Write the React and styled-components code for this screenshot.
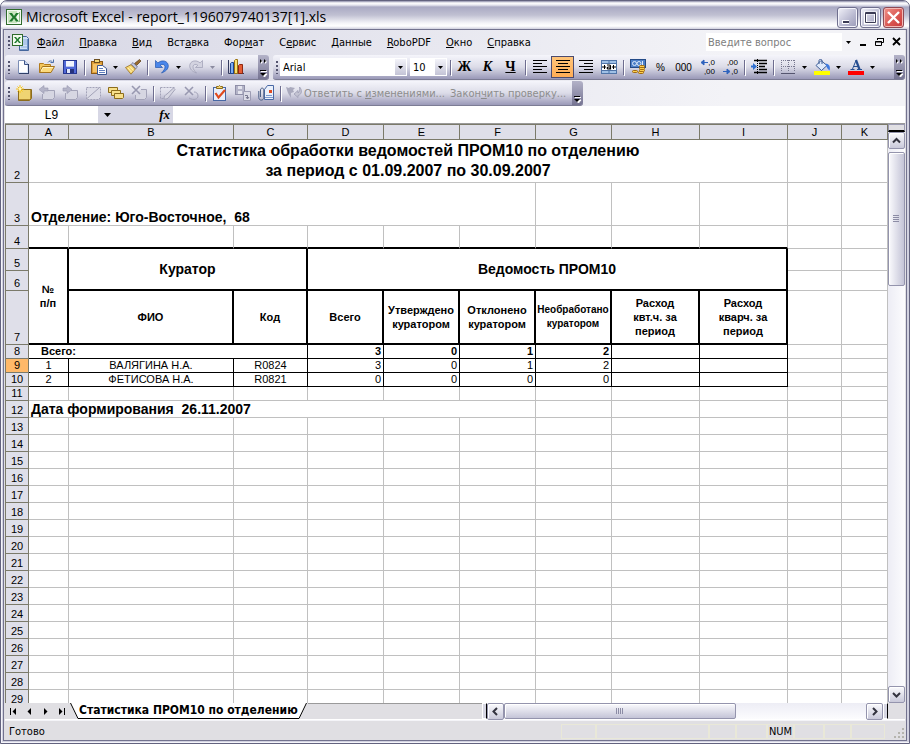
import { Fragment } from 'react';
import styled, { createGlobalStyle, css } from 'styled-components';

const uiFont = '"DejaVu Sans Condensed", "Noto Sans", sans-serif';
const cellFont = '"Liberation Sans", Arial, sans-serif';

const icons = {
  excel: (
    <>
      <rect x="0" y="0" width="16" height="16" fill="#2f6b2c" />
      <rect x="1" y="1" width="14" height="14" fill="#f4faf1" />
      <rect x="2" y="2" width="9" height="12" fill="#cbe6c1" />
      <path d="M3 4h3l2 3 2-3h3L9.500 8.200 13 12.500h-3l-2-3-2 3H3l3.500-4.300z" fill="#1f7a2c" />
      <path d="M13.500 3v10" stroke="#8dbf85" />
    </>
  ),
  workbook: (
    <>
      <path d="M7.500 2.500h7l2 2v12h-9z" fill="#cfe0f7" stroke="#44669c" />
      <path d="M15.500 5v11M8 15.500h8" stroke="#6f93c9" />
      <path d="M11 6h4M11 8h4M11 10h4M9 13h6" stroke="#8fb0de" />
      <rect x="0.500" y="0.500" width="10" height="11" fill="#f1faed" stroke="#2f6b2c" />
      <path d="M2 3h2l1.500 2L7 3h2L6.500 6 9 9H7L5.500 7 4 9H2l2.500-3z" fill="#1f7a2c" />
    </>
  ),
  page: (
    <>
      <path d="M2.500 1.500h6l4 4v9h-10z" fill="#fff" stroke="#7b8db5" />
      <path d="M8.500 1.500v4h4" fill="#c8d7f0" stroke="#3f5488" />
      <path d="M12.500 5v10M3 14.500h10" stroke="#2f3f68" />
      <path d="M11.500 6v8M3 13.500h9" stroke="#dbe5f7" />
    </>
  ),
  open: (
    <>
      <path d="M0.500 13.500v-9h4l1 1h6v3" fill="#f2c65c" stroke="#b27b1c" />
      <path d="M0.500 13.500l3-6h12l-3.500 6z" fill="#fbd97a" stroke="#a5731b" />
      <path d="M9 3.500c1-2 3.500-2 4.500-.5M14.500 0.500v3h-3" fill="none" stroke="#4a6fa8" />
      <path d="M2 12l2-3.500h10" stroke="#fff3c4" fill="none" />
    </>
  ),
  save: (
    <>
      <rect x="1.500" y="1.500" width="13" height="13" fill="#5068d8" stroke="#27378f" />
      <rect x="4" y="2" width="8" height="6" fill="#f1f4fd" />
      <path d="M4 7.500h8" stroke="#b8c4ea" />
      <rect x="4" y="10" width="8" height="4" fill="#25327d" />
      <rect x="5" y="10" width="3" height="4" fill="#dfe5fa" />
    </>
  ),
  paste: (
    <>
      <rect x="0.500" y="2.500" width="11" height="12" fill="#e0a13a" stroke="#8a5a17" />
      <rect x="3.500" y="0.500" width="5" height="3" fill="#f6d978" stroke="#6d5020" />
      <rect x="2" y="5" width="8" height="8" fill="#f4c469" />
      <path d="M6.500 6.500h5l4 3v6h-9z" fill="#fff" stroke="#3a5590" />
      <path d="M8 9.500h4M8 11.500h6M8 13.500h6" stroke="#5e7dbd" />
    </>
  ),
  brush: (
    <>
      <path d="M14.500 0.500l1.500 1.500-4.500 4.500-2-2z" fill="#9a6c2f" stroke="#5a3c14" strokeWidth="0.700" />
      <path d="M8 3.500l4.500 4.500-1.800 1.800-4.500-4.500z" fill="#c3c8dd" stroke="#5b6285" strokeWidth="0.700" />
      <path d="M6 5.700l4.300 4.300L6 15.200 0.500 8.500z" fill="#f6d672" stroke="#9b7020" strokeWidth="0.800" />
      <path d="M3 9l3.500 4M5 7.700l3.500 3.800" stroke="#fff1b8" />
    </>
  ),
  undo: (
    <path
      d="M1.500 1.500v7h7L6.200 6.200c2-1.500 4.600-.9 4.800 1.400.2 2.300-1.400 4.300-3.500 6.400 4-1.400 7-4 6.800-7.400C13.900 1.800 8 .3 3.900 3.900z"
      fill="#4a86ea"
      stroke="#2456ad"
      strokeWidth="0.700"
    />
  ),
  redo: (
    <path
      d="M14.500 1.500v7h-7l2.300-2.300c-2-1.500-4.600-.9-4.800 1.400-.2 2.300 1.400 4.300 3.500 6.400-4-1.400-7-4-6.800-7.400C2.100 1.800 8 .3 12.100 3.900z"
      fill="#d3d3e0"
      stroke="#9c9cb3"
      strokeWidth="0.700"
    />
  ),
  chart: (
    <>
      <path d="M0.500 1v13.500H16" fill="none" stroke="#333a5e" />
      <path d="M2.500 4.500l1-1h2v11h-3z" fill="#7dabef" stroke="#1e4591" />
      <path d="M6.500 1.500l1-1h2v14h-3z" fill="#f9df75" stroke="#9c7412" />
      <path d="M10.500 6.500l1-1h3v9h-4z" fill="#e55b33" stroke="#8f2810" />
    </>
  ),
  left: <path d="M1 2.500h14M1 5.500h9M1 8.500h14M1 11.500h9M1 14.500h14" stroke="#000" shapeRendering="crispEdges" transform="translate(0 -1)" />,
  center: <path d="M1 2.500h14M3 5.500h10M1 8.500h14M3 11.500h10M1 14.500h14" stroke="#000" shapeRendering="crispEdges" transform="translate(0 -1)" />,
  right: <path d="M1 2.500h14M6 5.500h9M1 8.500h14M6 11.500h9M1 14.500h14" stroke="#000" shapeRendering="crispEdges" transform="translate(0 -1)" />,
  merge: (
    <>
      <rect x="0.500" y="1.500" width="15" height="13" fill="#fff" stroke="#4f74a8" />
      <rect x="1" y="2" width="14" height="2" fill="#9fc0e6" />
      <rect x="1" y="12" width="14" height="2" fill="#9fc0e6" />
      <path d="M0 4.500h16M0 11.500h16M8 2v3M8 11v3" stroke="#4f74a8" />
      <path d="M1 8h4M11 8h4M3.500 6v4M12.500 6v4" stroke="#000" />
      <path d="M6 6h2.500c1 0 1 .5 1 1v3.500M9.500 8H7.300c-1.500 0-1.500 2 0 2 1.200 0 2.200-.4 2.200-1" stroke="#000" strokeWidth="1.200" fill="none" />
    </>
  ),
  currency: (
    <>
      <rect x="0.500" y="0.500" width="15" height="8" fill="#4d80c9" stroke="#234a87" />
      <circle cx="4.500" cy="4.500" r="2" fill="none" stroke="#d9e8fb" />
      <circle cx="9" cy="4.500" r="2" fill="none" stroke="#d9e8fb" />
      <path d="M12.500 2v5" stroke="#d9e8fb" />
      <rect x="9.500" y="6.500" width="5" height="2" rx="1" fill="#fbd04e" stroke="#a36a10" />
      <rect x="9.500" y="8.500" width="5" height="2" rx="1" fill="#fbd04e" stroke="#a36a10" />
      <rect x="9.500" y="10.500" width="5" height="2" rx="1" fill="#fbd04e" stroke="#a36a10" />
      <rect x="8.500" y="12.500" width="5" height="2" rx="1" fill="#fbd04e" stroke="#a36a10" />
      <rect x="2.500" y="11.500" width="5" height="2" rx="1" fill="#fbd04e" stroke="#a36a10" />
    </>
  ),
  indent: (
    <>
      <path d="M3 1.500h13M8 4.500h8M8 7.500h6M8 10.500h8M3 13.500h13" stroke="#000" strokeWidth="1.400" />
      <path d="M6.500 0v16" stroke="#000" strokeDasharray="1 1" />
      <path d="M0 6.500h2V4l4 3.500L2 11V8.500H0z" fill="#2f6fd0" />
    </>
  ),
  borders: (
    <>
      <path d="M1.500 1v12M8.500 1v12M14.500 1v12M1 1.500h14M1 7.500h14" stroke="#77778f" strokeDasharray="1 1" />
      <path d="M1 14.500h14" stroke="#55556f" />
    </>
  ),
  fill: (
    <>
      <path d="M7 1.500l6 5-5.500 5L2 6.500z" fill="#dfe9fa" stroke="#3c5c96" />
      <path d="M5 5V1.500C5 0 8 0 8 1.500V5" fill="none" stroke="#3c5c96" />
      <path d="M11.500 4.500c4 .5 5 3 4.100 7-1.700-1-2.800-3-3.300-4.500z" fill="#3f7be0" />
      <rect x="0" y="12" width="16" height="4" fill="#ff0" />
    </>
  ),
  fontColor: (
    <>
      <path d="M2.500 10.500h4M9 10.500h5M4.500 10L8 1.500M6 7.500h4.500" fill="none" stroke="#274f91" />
      <path d="M8 1l3.500 9.500" stroke="#274f91" strokeWidth="2.200" />
      <rect x="0" y="12" width="16" height="4" fill="#f00" />
    </>
  ),
  noteNew: (
    <>
      <path d="M2.500 4.500h13v9l-2 2h-11z" fill="#efd472" stroke="#8c6c1c" />
      <path d="M3 14.500h11M14.500 5v9" stroke="#b08b2e" />
      <path d="M4 0v8M0 4h8M1.500 1.500l5 5M6.500 1.500l-5 5" stroke="#f9c413" />
      <circle cx="4" cy="4" r="1.500" fill="#fff6b8" />
    </>
  ),
  noteBack: (
    <>
      <path d="M7 5.500h8.500v7l-2 2h-10V9" fill="#d6d6e2" stroke="#a3a3b8" />
      <path d="M0 4.500l5-4V3h4v3H5v2.500z" fill="#b4b4c8" stroke="#9898b0" strokeWidth="0.600" />
    </>
  ),
  noteForward: (
    <>
      <path d="M9 5.500h6.500v7l-2 2h-10V8" fill="#d6d6e2" stroke="#a3a3b8" />
      <path d="M10 4.500l-5-4V3H1v3h4v2.500z" fill="#b4b4c8" stroke="#9898b0" strokeWidth="0.600" />
    </>
  ),
  noteHide: (
    <>
      <path d="M1.500 2.500h14v10l-2 2h-12z" fill="#dcdce7" stroke="#a3a3b8" strokeDasharray="2 1" />
      <path d="M2 13.500L14 3" stroke="#a3a3b8" />
    </>
  ),
  notes: (
    <>
      <path d="M0.500 2.500h9v4l-1 1h-8z" fill="#f8e08a" stroke="#8c6c1c" />
      <path d="M3.500 5.500h9v4l-1 1h-8z" fill="#f8e08a" stroke="#8c6c1c" />
      <path d="M6.500 8.500h9v4l-1 1h-8z" fill="#f8e08a" stroke="#8c6c1c" />
    </>
  ),
  noteDelete: (
    <>
      <path d="M10 4.500h5.500v8l-2 2h-9V10" fill="#d6d6e2" stroke="#a3a3b8" />
      <path d="M1 1l8 8M9 1L1 9" stroke="#9898b0" strokeWidth="1.600" />
    </>
  ),
  ink: (
    <>
      <path d="M0.500 2.500h15M0.500 2.500v11h5" fill="none" stroke="#a3a3b8" strokeDasharray="2 1" />
      <path d="M4 14c0-3 1-4 3-5l6.500-6 1.500 1.500-6 7.500c-1 2-3 2-5 2z" fill="#d6d6e2" stroke="#a3a3b8" />
    </>
  ),
  inkDelete: (
    <>
      <path d="M2 2l8 8M10 2l-8 8" stroke="#9898b0" strokeWidth="1.600" />
      <path d="M6 13c5 3 9 1 9-2s-2-4-4-4" fill="none" stroke="#a3a3b8" />
    </>
  ),
  task: (
    <>
      <rect x="1.500" y="2.500" width="12" height="13" fill="#e8eefb" stroke="#4868a5" />
      <path d="M4.500 3.500v-2h2l1-1 1 1h2v2z" fill="#f6d672" stroke="#8c6c1c" />
      <path d="M3.500 8l3 4.500L13 5" fill="none" stroke="#e04a1e" strokeWidth="2.200" />
    </>
  ),
  saveCopy: (
    <>
      <rect x="0.500" y="0.500" width="9" height="9" fill="#b4b4c8" stroke="#8f8fa8" />
      <rect x="3" y="1" width="4" height="3" fill="#e5e5ee" />
      <rect x="3" y="6" width="4" height="3" fill="#e5e5ee" />
      <path d="M8.500 6.500h7v9h-7z" fill="#dcdce7" stroke="#9c9cb3" />
      <path d="M10 10.500h2.500v3M11 12l1.500 2 1.500-2" fill="none" stroke="#77778f" />
    </>
  ),
  mail: (
    <>
      <path d="M6.500 4.500l3-4h6v14h-9z" fill="#eaf0fb" stroke="#4868a5" />
      <path d="M7 12.500h8M8 10.500h6" stroke="#7b98cc" />
      <rect x="11" y="5" width="3" height="3" fill="#e04a1e" />
      <path d="M0.800 6v6.500c0 3.500 5 3.500 5 0V5c0-2.500-3.300-2.500-3.300 0v7" fill="none" stroke="#4a5f86" />
    </>
  ),
  reply: (
    <>
      <path d="M0 2l3 1 1-1 5 1-2 2 1 2-3 1v5L2 8z" fill="#a9a9bd" />
      <path d="M8 9l4-3.500V8c1.500-1 2-3 1.500-6C16.500 5 16 9.500 12 10.500v2z" fill="#c4c4d3" stroke="#9898b0" strokeWidth="0.700" />
    </>
  ),
};

const Icon = ({ name, size = 16 }) => (
  <svg width={size} height={size} viewBox={`0 0 ${size} ${size}`} aria-hidden="true">
    {icons[name]}
  </svg>
);

const Arrow = ({ color = '#000' }) => (
  <svg width="5" height="3" viewBox="0 0 5 3" aria-hidden="true">
    <path d="M0 0h5L2.500 3z" fill={color} />
  </svg>
);

const Chevron = ({ d }) => (
  <svg width="9" height="9" viewBox="0 0 9 9" aria-hidden="true">
    <path d={d} fill="none" stroke="#33333f" strokeWidth="2" />
  </svg>
);

const menus = [
  ['', 'Ф', 'айл'],
  ['', 'П', 'равка'],
  ['', 'В', 'ид'],
  ['Вст', 'а', 'вка'],
  ['Фор', 'м', 'ат'],
  ['С', 'е', 'рвис'],
  ['', 'Д', 'анные'],
  ['', 'R', 'oboPDF'],
  ['', 'О', 'кно'],
  ['', 'С', 'правка'],
];

const columns = [
  ['A', 40],
  ['B', 165],
  ['C', 74],
  ['D', 76],
  ['E', 76],
  ['F', 76],
  ['G', 76],
  ['H', 88],
  ['I', 88],
  ['J', 54],
  ['K', null],
];

const people = [
  { row: 9, id: 1, name: 'ВАЛЯГИНА Н.А.', code: 'R0824', values: [3, 0, 1, 2] },
  { row: 10, id: 2, name: 'ФЕТИСОВА Н.А.', code: 'R0821', values: [0, 0, 0, 0] },
];

const emptyRows = Array.from({ length: 17 }, (_, i) => i + 13);

const statusCells = [35, 113, 27, 31];
const statusCellsAfter = [30, 27, 34];

const Tool = ({ name, label, pressed, disabled }) => (
  <ToolButton aria-label={label} $pressed={pressed} disabled={disabled}>
    <Icon name={name} />
  </ToolButton>
);

const Drop = ({ label, disabled }) => (
  <DropButton aria-label={label} disabled={disabled}>
    <Arrow color={disabled ? '#8b8ba0' : '#000'} />
  </DropButton>
);

const ToolbarEnd = ({ more }) => (
  <Overflow aria-label="Параметры панелей инструментов">
    <svg width="9" height="22" viewBox="0 0 9 22" aria-hidden="true">
      {more && <path d="M2 4l2 2-2 2zM6 4l2 2-2 2z" fill="#fff" />}
      {more && <path d="M1 3l2 2-2 2zM5 3l2 2-2 2z" fill="#000" />}
      <path d="M2 15.500h6M3 18h5L5.500 21z" stroke="#fff" fill="#fff" />
      <path d="M1 14.500h6" stroke="#000" />
      <path d="M1 17h6l-3 3z" fill="#000" />
    </svg>
  </Overflow>
);

const Blank = ({ count }) =>
  Array.from({ length: count }, (_, i) => <Cell key={i} />);

const App = () => (
  <Fragment>
    <GlobalStyle />
    <Window>
      <TitleBar>
        <Icon name="excel" />
        <Title>Microsoft Excel - report_1196079740137[1].xls</Title>
        <Caption aria-label="Свернуть">
          <svg width="19" height="19" viewBox="0 0 19 19">
            <path d="M4 14h7" stroke="#fff" strokeWidth="4" />
            <path d="M5 14h6" stroke="#3b3b55" strokeWidth="2" />
          </svg>
        </Caption>
        <Caption aria-label="Развернуть">
          <svg width="19" height="19" viewBox="0 0 19 19">
            <rect x="4.500" y="5" width="10" height="10" fill="none" stroke="#fff" strokeWidth="3" />
            <path d="M4.500 4.500h10v10h-10zM4 5.500h11" fill="none" stroke="#3b3b55" />
          </svg>
        </Caption>
        <Caption $close aria-label="Закрыть">
          <svg width="19" height="19" viewBox="0 0 19 19">
            <path d="M4 4l11 11M15 4L4 15" stroke="#fff" strokeWidth="2.400" />
          </svg>
        </Caption>
      </TitleBar>
      <Client>
        <Dock>
          <MenuBar>
            <Grip />
            <Icon name="workbook" size={17} />
            {menus.map(([before, key, after]) => (
              <MenuItem key={before + key + after}>
                {before}
                <u>{key}</u>
                {after}
              </MenuItem>
            ))}
            <Question>
              <QuestionInput aria-label="Введите вопрос" placeholder="Введите вопрос" />
              <QuestionDrop aria-label="Список вопросов">
                <Arrow />
              </QuestionDrop>
            </Question>
            <DocButton aria-label="Свернуть книгу">
              <svg width="11" height="10" viewBox="0 0 11 10">
                <path d="M3 8h6" stroke="#000" strokeWidth="2" />
              </svg>
            </DocButton>
            <DocButton aria-label="Восстановить книгу">
              <svg width="11" height="10" viewBox="0 0 11 10">
                <path d="M3.500 3V1.500h6v4H8M3 1.500h7" fill="none" stroke="#000" />
                <path d="M1.500 4.500h6v4h-6zM1 5h7" fill="none" stroke="#000" />
              </svg>
            </DocButton>
            <DocButton aria-label="Закрыть книгу">
              <svg width="11" height="10" viewBox="0 0 11 10">
                <path d="M2 1l7 7M9 1L2 8" stroke="#000" strokeWidth="1.800" />
              </svg>
            </DocButton>
          </MenuBar>
          <ToolbarRow>
            <Toolbar>
              <Grip />
              <Tool name="page" label="Создать" />
              <Tool name="open" label="Открыть" />
              <Tool name="save" label="Сохранить" />
              <Separator />
              <Tool name="paste" label="Вставить" />
              <Drop label="Параметры вставки" />
              <Tool name="brush" label="Формат по образцу" />
              <Separator />
              <Tool name="undo" label="Отменить" />
              <Drop label="Список отмены" />
              <Tool name="redo" label="Вернуть" disabled />
              <Drop label="Список возврата" disabled />
              <Separator />
              <Tool name="chart" label="Мастер диаграмм" />
              <Filler $width={11} />
              <ToolbarEnd more />
            </Toolbar>
            <Toolbar $grow>
              <Grip />
              <SelectBox $width={127}>
                <Select aria-label="Шрифт" defaultValue="Arial">
                  <option>Arial</option>
                </Select>
                <SelectArrow>
                  <Arrow />
                </SelectArrow>
              </SelectBox>
              <SelectBox $width={37}>
                <Select aria-label="Размер" defaultValue="10">
                  <option>10</option>
                </Select>
                <SelectArrow>
                  <Arrow />
                </SelectArrow>
              </SelectBox>
              <Separator />
              <LetterButton>Ж</LetterButton>
              <LetterButton $italic>К</LetterButton>
              <LetterButton><u>Ч</u></LetterButton>
              <Separator />
              <Tool name="left" label="По левому краю" />
              <Tool name="center" label="По центру" pressed />
              <Tool name="right" label="По правому краю" />
              <Tool name="merge" label="Объединить и поместить в центре" />
              <Separator />
              <Tool name="currency" label="Денежный формат" />
              <NumberButton>%</NumberButton>
              <NumberButton>000</NumberButton>
              <DigitsButton aria-label="Увеличить разрядность">
                <DigitLine>
                  <svg width="8" height="7" viewBox="0 0 8 7">
                    <path d="M8 3.500H3M4 1L1 3.500 4 6z" stroke="#2f63bd" fill="#2f63bd" />
                  </svg>
                  ,0
                </DigitLine>
                <DigitLine>,00</DigitLine>
              </DigitsButton>
              <DigitsButton aria-label="Уменьшить разрядность">
                <DigitLine>,00</DigitLine>
                <DigitLine>
                  <svg width="8" height="7" viewBox="0 0 8 7">
                    <path d="M0 3.500h5M4 1l3 2.500L4 6z" stroke="#2f63bd" fill="#2f63bd" />
                  </svg>
                  ,0
                </DigitLine>
              </DigitsButton>
              <Separator />
              <Tool name="indent" label="Увеличить отступ" />
              <Separator />
              <Tool name="borders" label="Границы" />
              <Drop label="Виды границ" />
              <Tool name="fill" label="Цвет заливки" />
              <Drop label="Выбор цвета заливки" />
              <Tool name="fontColor" label="Цвет шрифта" />
              <Drop label="Выбор цвета шрифта" />
              <Filler $width={0} />
              <ToolbarEnd more />
            </Toolbar>
          </ToolbarRow>
          <ToolbarRow>
            <Toolbar>
              <Grip />
              <Tool name="noteNew" label="Создать примечание" />
              <Tool name="noteBack" label="Предыдущее примечание" disabled />
              <Tool name="noteForward" label="Следующее примечание" disabled />
              <Tool name="noteHide" label="Скрыть примечание" disabled />
              <Tool name="notes" label="Показать все примечания" />
              <Tool name="noteDelete" label="Удалить примечание" disabled />
              <Separator />
              <Tool name="ink" label="Показать рукописные данные" disabled />
              <Tool name="inkDelete" label="Удалить рукописные данные" disabled />
              <Separator />
              <Tool name="task" label="Создать задачу" />
              <Tool name="saveCopy" label="Обновить файл" disabled />
              <Tool name="mail" label="Сообщение" />
              <Separator />
              <TextButton disabled>
                <Icon name="reply" />
                <span>
                  Ответить с <u>и</u>зменениями...
                </span>
              </TextButton>
              <TextButton disabled>
                <span>
                  Закон<u>ч</u>ить проверку...
                </span>
              </TextButton>
              <Filler $width={4} />
              <ToolbarEnd />
            </Toolbar>
          </ToolbarRow>
        </Dock>
        <FormulaBar>
          <NameInput aria-label="Имя" defaultValue="L9" />
          <NameDrop aria-label="Список имён">
            <svg width="7" height="4" viewBox="0 0 7 4">
              <path d="M0 0h7L3.500 4z" />
            </svg>
          </NameDrop>
          <FxButton>fx</FxButton>
          <FormulaInput aria-label="Строка формул" />
        </FormulaBar>
        <SheetArea>
          <SheetView>
            <Sheet>
              <colgroup>
                <Col $width={24} />
                {columns.map(([name, width]) => (
                  <Col key={name} $width={width} />
                ))}
              </colgroup>
              <thead>
                <Row $height={16}>
                  <ColHead aria-label="Выделить всё" />
                  {columns.map(([name]) => (
                    <ColHead key={name}>{name}</ColHead>
                  ))}
                </Row>
              </thead>
              <tbody>
                <Row $height={43}>
                  <RowHead>2</RowHead>
                  <Cell colSpan={9} $size={16} $line={20} $bold $align="center">
                    Статистика обработки ведомостей ПРОМ10 по отделению
                    <br />
                    за период с 01.09.2007 по 30.09.2007
                  </Cell>
                  <Blank count={2} />
                </Row>
                <Row $height={43}>
                  <RowHead>3</RowHead>
                  <Cell colSpan={6} $size={14} $line={16} $bold $valign="bottom">
                    Отделение: Юго-Восточное,&nbsp; 68
                  </Cell>
                  <Blank count={5} />
                </Row>
                <Row $height={23}>
                  <RowHead>4</RowHead>
                  {columns.slice(0, 9).map(([name]) => (
                    <Cell key={name} $edge="bottom" />
                  ))}
                  <Blank count={2} />
                </Row>
                <Row $height={22}>
                  <RowHead>5</RowHead>
                  <Cell rowSpan={3} $edge="both" $bold $align="center" $line={14}>
                    №<br />п/п
                  </Cell>
                  <Cell colSpan={2} rowSpan={2} $edge="both" $bold $size={14} $align="center">
                    Куратор
                  </Cell>
                  <Cell colSpan={6} rowSpan={2} $edge="both" $bold $size={14} $align="center">
                    Ведомость ПРОМ10
                  </Cell>
                  <Blank count={2} />
                </Row>
                <Row $height={20}>
                  <RowHead>6</RowHead>
                  <Blank count={2} />
                </Row>
                <Row $height={54}>
                  <RowHead>7</RowHead>
                  <HeadCell>ФИО</HeadCell>
                  <HeadCell>Код</HeadCell>
                  <HeadCell>Всего</HeadCell>
                  <HeadCell>Утверждено куратором</HeadCell>
                  <HeadCell>Отклонено куратором</HeadCell>
                  <HeadCell $size={10}>Необработано куратором</HeadCell>
                  <HeadCell>
                    Расход
                    <br />
                    квт.ч. за
                    <br />
                    период
                  </HeadCell>
                  <HeadCell>
                    Расход
                    <br />
                    кварч. за
                    <br />
                    период
                  </HeadCell>
                  <Blank count={2} />
                </Row>
                <Row $height={14}>
                  <RowHead>8</RowHead>
                  <Cell colSpan={3} $edge="thin" $bold $indent>
                    Всего:
                  </Cell>
                  {[3, 0, 1, 2].map((value, i) => (
                    <Cell key={i} $edge="thin" $bold $align="right">
                      {value}
                    </Cell>
                  ))}
                  <Cell $edge="thin" />
                  <Cell $edge="thin" />
                  <Blank count={2} />
                </Row>
                {people.map((person) => (
                  <Row key={person.row} $height={14}>
                    <RowHead $active={person.row === 9}>{person.row}</RowHead>
                    <Cell $edge="thin" $align="center">{person.id}</Cell>
                    <Cell $edge="thin" $align="center">{person.name}</Cell>
                    <Cell $edge="thin" $align="center">{person.code}</Cell>
                    {person.values.map((value, i) => (
                      <Cell key={i} $edge="thin" $align="right">
                        {value}
                      </Cell>
                    ))}
                    <Cell $edge="thin" />
                    <Cell $edge="thin" />
                    <Blank count={2} />
                  </Row>
                ))}
                <Row $height={14}>
                  <RowHead>11</RowHead>
                  <Blank count={11} />
                </Row>
                <Row $height={17}>
                  <RowHead>12</RowHead>
                  <Cell colSpan={6} $size={14} $line={16} $bold>
                    Дата формирования&nbsp; 26.11.2007
                  </Cell>
                  <Blank count={5} />
                </Row>
                {emptyRows.map((row) => (
                  <Row key={row} $height={17}>
                    <RowHead>{row}</RowHead>
                    <Blank count={11} />
                  </Row>
                ))}
              </tbody>
            </Sheet>
          </SheetView>
          <VerticalScroll>
            <SplitHandle />
            <ScrollButton aria-label="Вверх">
              <Chevron d="M1 6.500l3.500-3.500L8 6.500" />
            </ScrollButton>
            <VerticalTrack>
              <VerticalThumb>
                <svg width="7" height="8" viewBox="0 0 7 8">
                  <path d="M0 .5h6M0 2.500h6M0 4.500h6M0 6.500h6" stroke="#8c8ca5" />
                </svg>
              </VerticalThumb>
            </VerticalTrack>
            <ScrollButton aria-label="Вниз">
              <Chevron d="M1 3l3.500 3.500L8 3" />
            </ScrollButton>
          </VerticalScroll>
        </SheetArea>
        <BottomBar>
          <TabArea>
            <TabNav aria-label="Первый лист">
              <svg width="7" height="7" viewBox="0 0 7 7">
                <path d="M.5 0v7" stroke="#000" />
                <path d="M6 0v7L2.500 3.500z" />
              </svg>
            </TabNav>
            <TabNav aria-label="Предыдущий лист">
              <svg width="7" height="7" viewBox="0 0 7 7">
                <path d="M5 0v7L1.500 3.500z" />
              </svg>
            </TabNav>
            <TabNav aria-label="Следующий лист">
              <svg width="7" height="7" viewBox="0 0 7 7">
                <path d="M2 0v7l3.500-3.500z" />
              </svg>
            </TabNav>
            <TabNav aria-label="Последний лист">
              <svg width="7" height="7" viewBox="0 0 7 7">
                <path d="M6.500 0v7" stroke="#000" />
                <path d="M1 0v7l3.500-3.500z" />
              </svg>
            </TabNav>
            <svg width="10" height="16" viewBox="0 0 10 16">
              <path d="M1 0h9v16H9z" fill="#fff" />
              <path d="M1.500 0l7.500 15.500h1" fill="none" stroke="#000" />
            </svg>
            <SheetTab>Статистика ПРОМ10 по отделению</SheetTab>
            <svg width="10" height="16" viewBox="0 0 10 16">
              <path d="M9 0H0v16h1z" fill="#fff" />
              <path d="M8.500 0L1 15.500H0" fill="none" stroke="#000" />
            </svg>
            <TabRest />
          </TabArea>
          <HorizontalScroll>
            <Splitter />
            <ScrollButton aria-label="Влево">
              <Chevron d="M6 1L2.500 4.500 6 8" />
            </ScrollButton>
            <HorizontalTrack>
              <HorizontalThumb>
                <svg width="8" height="6" viewBox="0 0 8 6">
                  <path d="M.5 0v6M2.500 0v6M4.500 0v6M6.500 0v6" stroke="#8c8ca5" />
                </svg>
              </HorizontalThumb>
            </HorizontalTrack>
            <ScrollButton aria-label="Вправо">
              <Chevron d="M3 1l3.500 3.500L3 8" />
            </ScrollButton>
            <Splitter />
          </HorizontalScroll>
        </BottomBar>
        <StatusBar>
          <StatusText>Готово</StatusText>
          {statusCells.map((width, i) => (
            <StatusCell key={i} $width={width} />
          ))}
          <StatusCell $width={27}>NUM</StatusCell>
          {statusCellsAfter.map((width, i) => (
            <StatusCell key={i} $width={width} />
          ))}
          <SizeGrip width="11" height="11" viewBox="0 0 11 11">
            <path d="M8 0h2v2H8zM4 4h2v2H4zM8 4h2v2H8zM0 8h2v2H0zM4 8h2v2H4zM8 8h2v2H8z" fill="#b5b4ae" />
          </SizeGrip>
        </StatusBar>
      </Client>
    </Window>
  </Fragment>
);

const GlobalStyle = createGlobalStyle`
  * {
    box-sizing: border-box;
  }

  body {
    margin: 0;
    background: #fff;
    font: 11px ${uiFont};
    color: #000;
  }

  button,
  input,
  select {
    margin: 0;
    padding: 0;
    border: 0;
    border-radius: 0;
    background: none;
    font: inherit;
    color: inherit;
    outline: 0;
  }

  svg {
    display: block;
    flex: none;
  }
`;

const Window = styled.div`
  display: flex;
  flex-direction: column;
  height: 100vh;
  padding: 0 2px 2px;
  overflow: hidden;
  border: 1px solid #63637f;
  border-radius: 7px 7px 0 0;
  background: #d2d2e0;
  box-shadow: inset 1px -1px 0 #f4f4fa;
`;

const TitleBar = styled.header`
  display: flex;
  align-items: center;
  flex: none;
  gap: 2px;
  height: 28px;
  margin: 0 -2px;
  padding: 4px 5px 0;
  background: linear-gradient(#8b8ba8, #fff 2px, #e8e8f0 4px, #a9a9c3 6px, #c0c0d2 14px, #f4f4f8 22px, #fff 25px, #d0d0de);
`;

const Title = styled.h1`
  flex: 1;
  margin: 0 0 0 2px;
  font: 500 14px 'Open Sans', 'Noto Sans', sans-serif;
  line-height: 20px;
  white-space: nowrap;
`;

const Caption = styled.button`
  display: flex;
  align-items: center;
  justify-content: center;
  flex: none;
  width: 21px;
  height: 21px;
  border: 1px solid ${(props) => (props.$close ? '#8e4a55' : '#6f6f8e')};
  border-radius: 3px;
  box-shadow: inset 0 0 0 1px ${(props) => (props.$close ? '#f3b9b5' : '#f4f4fb')};
  background: ${(props) =>
    props.$close
      ? 'linear-gradient(135deg, #f0928a, #d8534f 60%, #c93a3c)'
      : 'linear-gradient(135deg, #f2f2f9, #b9b9d0 60%, #9a9ab8)'};
`;

const Client = styled.main`
  display: flex;
  flex-direction: column;
  flex: 1;
  min-height: 0;
  padding: 0 1px;
  border: 1px solid #73738f;
  background: #e0dfe3;
`;

const Dock = styled.div`
  display: flex;
  flex-direction: column;
  flex: none;
  gap: 1px;
  background: linear-gradient(90deg, #d7d7e5, #f3f3f7 80%);
`;

const MenuBar = styled.nav`
  display: flex;
  align-items: center;
  height: 24px;
`;

const Grip = styled.span`
  flex: none;
  width: 2px;
  height: 13px;
  margin: 0 2px 0 3px;
  background: repeating-linear-gradient(#54546f 0 2px, transparent 2px 4px);
`;

const MenuItem = styled.button`
  padding: 0 7px 0 8px;
  white-space: nowrap;
`;

const Question = styled.div`
  display: flex;
  width: 148px;
  height: 18px;
  margin-left: auto;
  background: #fff;
`;

const QuestionInput = styled.input`
  flex: 1;
  min-width: 0;
  padding-left: 2px;

  &::placeholder {
    color: #808080;
    opacity: 1;
  }
`;

const QuestionDrop = styled.button`
  display: flex;
  align-items: center;
  justify-content: center;
  width: 12px;
  background: #f3f3f7;
`;

const DocButton = styled.button`
  display: flex;
  align-items: center;
  justify-content: center;
  width: 17px;
  height: 18px;
`;

const ToolbarRow = styled.div`
  display: flex;
  gap: 4px;
`;

const Toolbar = styled.div`
  display: flex;
  align-items: center;
  flex: ${(props) => (props.$grow ? 1 : 'none')};
  height: 25px;
  border-bottom: 1px solid #7c7c94;
  border-radius: 3px;
  background: linear-gradient(#f5f5fb, #dcdce8 50%, #9a99b8);
`;

const Filler = styled.span`
  flex: 1;
  min-width: ${(props) => props.$width}px;
`;

const Separator = styled.span`
  flex: none;
  width: 1px;
  height: 15px;
  margin: 0 2px 0 3px;
  background: #6e6d8f;
  box-shadow: 1px 1px 0 #fff;
`;

const toolButton = css`
  display: flex;
  align-items: center;
  justify-content: center;
  flex: none;
  width: 23px;
  height: 22px;
`;

const ToolButton = styled.button`
  ${toolButton};

  ${(props) =>
    props.$pressed &&
    css`
      border: 1px solid #4b4b6f;
      background: linear-gradient(#ffc57a, #ffad55);
    `}
`;

const DropButton = styled.button`
  display: flex;
  align-items: center;
  justify-content: center;
  flex: none;
  width: 11px;
  height: 22px;
`;

const LetterButton = styled.button`
  ${toolButton};
  font: ${(props) => (props.$italic ? 'italic' : 'normal')} bold 14px 'Liberation Serif', serif;
`;

const NumberButton = styled.button`
  ${toolButton};
  font: 10px ${cellFont};
`;

const DigitsButton = styled.button`
  ${toolButton};
  flex-direction: column;
  align-items: flex-end;
  padding-right: 3px;
  font: 8px ${cellFont};
`;

const DigitLine = styled.span`
  display: flex;
  align-items: center;
  line-height: 9px;
`;

const TextButton = styled.button`
  display: flex;
  align-items: center;
  gap: 2px;
  height: 22px;
  padding: 0 2px 0 3px;
  color: #8d8d8d;
  white-space: nowrap;
`;

const Overflow = styled.button`
  display: flex;
  align-items: center;
  justify-content: center;
  align-self: stretch;
  flex: none;
  width: 11px;
  border-radius: 0 3px 3px 0;
  background: linear-gradient(#b3b2c8, #767492);
`;

const SelectBox = styled.div`
  position: relative;
  flex: none;
  width: ${(props) => props.$width}px;
  height: 18px;
  background: #fff;

  & + & {
    margin-left: 3px;
  }
`;

const Select = styled.select`
  width: 100%;
  height: 100%;
  padding-left: 3px;
  appearance: none;
`;

const SelectArrow = styled.span`
  position: absolute;
  top: 1px;
  right: 1px;
  bottom: 1px;
  display: flex;
  align-items: center;
  justify-content: center;
  width: 11px;
  background: linear-gradient(#f3f3f9, #c4c4d6);
  pointer-events: none;
`;

const FormulaBar = styled.div`
  display: flex;
  flex: none;
  height: 18px;
  border-bottom: 1px solid #9a9a9a;
  background: #d7d7e5;
`;

const NameInput = styled.input`
  width: 93px;
  background: #fff;
  font: 12px ${cellFont};
  text-align: center;
`;

const NameDrop = styled.button`
  display: flex;
  align-items: center;
  justify-content: center;
  width: 19px;
`;

const FxButton = styled.button`
  width: 56px;
  padding-right: 3px;
  font: italic bold 13px 'Liberation Serif', serif;
  line-height: 15px;
  text-align: right;
`;

const FormulaInput = styled.input`
  flex: 1;
  min-width: 0;
  background: #fff;
`;

const SheetArea = styled.div`
  display: flex;
  flex: 1;
  min-height: 0;
`;

const SheetView = styled.section`
  flex: 1;
  min-width: 0;
  overflow: hidden;
  background: #fff;
`;

const Sheet = styled.table`
  width: 100%;
  table-layout: fixed;
  border-spacing: 0;
  font: 11px ${cellFont};
`;

const Col = styled.col`
  width: ${(props) => (props.$width ? `${props.$width}px` : 'auto')};
`;

const Row = styled.tr`
  height: ${(props) => props.$height}px;
`;

const ColHead = styled.th`
  padding: 0;
  border: 1px solid #7b7a6a;
  border-left: 0;
  background: #dfdfe9;
  font-weight: normal;
  line-height: 13px;

  &:first-child {
    border-left: 1px solid #7b7a6a;
  }
`;

const RowHead = styled.th`
  padding: 0;
  border: 1px solid #7b7a6a;
  border-top: 0;
  background: ${(props) => (props.$active ? '#ffb969' : '#dfdfe9')};
  font-weight: normal;
  line-height: 13px;
  vertical-align: bottom;
`;

const edges = {
  both: css`
    border-right: 2px solid #000;
    border-bottom: 2px solid #000;
  `,
  bottom: css`
    border-bottom: 2px solid #000;
  `,
  thin: css`
    border-color: #000;
  `,
};

const Cell = styled.td`
  padding: 0 2px;
  border-right: 1px solid #c0c0c0;
  border-bottom: 1px solid #c0c0c0;
  font-size: ${(props) => props.$size || 11}px;
  font-weight: ${(props) => (props.$bold ? 'bold' : 'normal')};
  line-height: ${(props) => props.$line || 13}px;
  text-align: ${(props) => props.$align || 'left'};
  vertical-align: ${(props) => props.$valign || 'middle'};
  white-space: nowrap;

  ${(props) => edges[props.$edge]}
  ${(props) =>
    props.$indent &&
    css`
      padding-left: 12px;
    `}
`;

const HeadCell = styled(Cell).attrs({
  $edge: 'both',
  $bold: true,
  $align: 'center',
  $line: 14,
})`
  padding: 0;
  white-space: normal;
`;

const VerticalScroll = styled.div`
  display: flex;
  flex-direction: column;
  flex: none;
  width: 17px;
  background: #f1f1f8;
`;

const SplitHandle = styled.div`
  height: 8px;
  border: 1px solid #9a9ab0;
  border-bottom: 2px solid #000;
  background: #e0dfe3;
`;

const scrollPart = css`
  display: flex;
  align-items: center;
  justify-content: center;
  border: 1px solid #9494ad;
  border-radius: 2px;
  box-shadow: inset 1px 1px 0 #fff;
`;

const ScrollButton = styled.button`
  ${scrollPart};
  flex: none;
  width: 17px;
  height: 17px;
  background: linear-gradient(#fafafd, #c9c9da);
`;

const VerticalTrack = styled.div`
  flex: 1;
  padding-top: 3px;
  background: linear-gradient(90deg, #ededf5, #fcfcfe);
`;

const VerticalThumb = styled.div`
  ${scrollPart};
  height: 25%;
  background: linear-gradient(90deg, #fafafd, #c4c4d7);
`;

const BottomBar = styled.div`
  display: flex;
  flex: none;
  height: 17px;
  padding-right: 17px;
  border-bottom: 1px solid #fff;
`;

const TabArea = styled.div`
  display: flex;
  flex: 1;
  min-width: 0;
`;

const TabNav = styled.button`
  display: flex;
  align-items: center;
  justify-content: center;
  width: 16px;
`;

const SheetTab = styled.button`
  flex: none;
  border-bottom: 1px solid #000;
  background: #fff;
  font-size: 12px;
  font-weight: bold;
  line-height: 15px;
  white-space: nowrap;
`;

const TabRest = styled.span`
  flex: 1;
  border-top: 1px solid #9a9a9a;
`;

const HorizontalScroll = styled.div`
  display: flex;
  flex: none;
  width: 46%;
  background: #f6f6fb;
`;

const Splitter = styled.span`
  width: 5px;
  border: 1px solid #fff;
  border-right: 1px solid #000;
  background: #d6d6e2;
`;

const HorizontalTrack = styled.div`
  flex: 1;
  background: linear-gradient(#ededf5, #fcfcfe);
`;

const HorizontalThumb = styled.div`
  ${scrollPart};
  width: 64%;
  height: 100%;
  background: linear-gradient(#fafafd, #c4c4d7);
`;

const StatusBar = styled.footer`
  position: relative;
  display: flex;
  align-items: center;
  flex: none;
  height: 20px;
  padding: 2px 20px 0 4px;
  border-top: 1px solid #f4f4f8;
`;

const StatusText = styled.span`
  flex: 1;
`;

const StatusCell = styled.span`
  flex: none;
  width: ${(props) => props.$width}px;
  height: 15px;
  border: 1px solid #e9e8d8;
  line-height: 13px;
  text-align: center;
`;

const SizeGrip = styled.svg`
  position: absolute;
  right: 0;
  bottom: 1px;
`;

export default App;
